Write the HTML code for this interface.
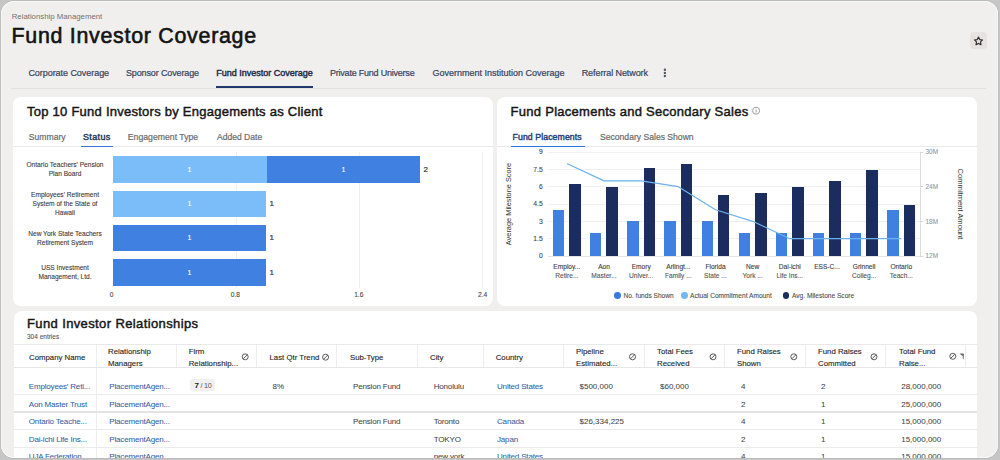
<!DOCTYPE html>
<html><head><meta charset="utf-8">
<style>
*{box-sizing:border-box;margin:0;padding:0}
html,body{width:1000px;height:460px;overflow:hidden;background:#c6c6c6;font-family:"Liberation Sans",sans-serif;}
#frame{position:absolute;left:1px;top:1px;width:997.4px;height:457.3px;background:#f0efed;border-radius:13px;overflow:hidden;box-shadow:0 0 0 0.7px #b9b9b9, inset 0 0 0 1px #f7f7f6}
#in{position:absolute;left:-1px;top:-1px;width:1000px;height:460px}
.t{position:absolute;white-space:nowrap}
.r{position:absolute}
svg{position:absolute;left:0;top:0}
</style></head><body>
<div id="frame"><div id="in">
<div class="t" style="left:11.70px;top:13.00px;font-size:7.8px;line-height:7.8px;color:#727272;font-weight:400;-webkit-text-stroke:0px;">Relationship Management</div>
<div class="t" style="left:11.50px;top:25.88px;font-size:21.4px;line-height:21.4px;color:#141414;font-weight:400;-webkit-text-stroke:0.6px #141414;letter-spacing:0.72px">Fund Investor Coverage</div>
<div class="r" style="left:970.00px;top:32.20px;width:17.00px;height:17.00px;background:#e6e2df;border-radius:4px"></div>
<svg width="1000" height="460" style="z-index:2"><path d="M978.50 37.00 L979.73 39.60 L982.59 39.97 L980.50 41.95 L981.03 44.78 L978.50 43.40 L975.97 44.78 L976.50 41.95 L974.41 39.97 L977.27 39.60 Z" fill="none" stroke="#2a2a2a" stroke-width="1.1" stroke-linejoin="round"/></svg>
<div class="t" style="left:28.40px;top:69.38px;font-size:9px;line-height:9px;color:#34435e;font-weight:400;-webkit-text-stroke:0.2px #34435e;letter-spacing:-0.05px">Corporate Coverage</div>
<div class="t" style="left:126.00px;top:69.38px;font-size:9px;line-height:9px;color:#34435e;font-weight:400;-webkit-text-stroke:0.2px #34435e;letter-spacing:-0.13px">Sponsor Coverage</div>
<div class="t" style="left:216.30px;top:69.38px;font-size:9px;line-height:9px;color:#1d2c4c;font-weight:400;-webkit-text-stroke:0.42px #1d2c4c;">Fund Investor Coverage</div>
<div class="t" style="left:330.00px;top:69.38px;font-size:9px;line-height:9px;color:#34435e;font-weight:400;-webkit-text-stroke:0.2px #34435e;letter-spacing:-0.22px">Private Fund Universe</div>
<div class="t" style="left:432.50px;top:69.38px;font-size:9px;line-height:9px;color:#34435e;font-weight:400;-webkit-text-stroke:0.2px #34435e;">Government Institution Coverage</div>
<div class="t" style="left:581.70px;top:69.38px;font-size:9px;line-height:9px;color:#34435e;font-weight:400;-webkit-text-stroke:0.2px #34435e;letter-spacing:-0.08px">Referral Network</div>
<svg width="1000" height="460"><circle cx="664.9" cy="69.8" r="1.2" fill="#525a6a"/><circle cx="664.9" cy="72.9" r="1.2" fill="#525a6a"/><circle cx="664.9" cy="76.0" r="1.2" fill="#525a6a"/></svg>
<div class="r" style="left:11.00px;top:87.50px;width:975.00px;height:1.50px;background:#e2e1df;"></div>
<div class="r" style="left:216.00px;top:86.30px;width:97.00px;height:1.80px;background:#1f3a6b;"></div>
<div class="r" style="left:13.00px;top:96.80px;width:480.00px;height:209.70px;background:#fff;border-radius:8px"></div>
<div class="r" style="left:497.00px;top:96.80px;width:480.00px;height:209.70px;background:#fff;border-radius:8px"></div>
<div class="r" style="left:13.50px;top:311.00px;width:963.00px;height:170.00px;background:#fff;border-radius:8px"></div>
<div class="t" style="left:27.00px;top:104.80px;font-size:13px;line-height:13px;color:#161616;font-weight:400;-webkit-text-stroke:0.45px #161616;letter-spacing:0.25px">Top 10 Fund Investors by Engagements as Client</div>
<div class="t" style="left:28.80px;top:133.22px;font-size:8.6px;line-height:8.6px;color:#6b6b6b;font-weight:400;-webkit-text-stroke:0.2px #6b6b6b;">Summary</div>
<div class="t" style="left:83.00px;top:132.88px;font-size:9px;line-height:9px;color:#1f3557;font-weight:400;-webkit-text-stroke:0.42px #1f3557;letter-spacing:0.35px">Status</div>
<div class="t" style="left:127.80px;top:133.14px;font-size:8.7px;line-height:8.7px;color:#6b6b6b;font-weight:400;-webkit-text-stroke:0.2px #6b6b6b;">Engagement Type</div>
<div class="t" style="left:217.00px;top:133.26px;font-size:8.55px;line-height:8.55px;color:#6b6b6b;font-weight:400;-webkit-text-stroke:0.2px #6b6b6b;">Added Date</div>
<div class="r" style="left:13.00px;top:146.30px;width:480.00px;height:1.00px;background:#e8e8e8;"></div>
<div class="r" style="left:81.00px;top:145.60px;width:32.00px;height:1.70px;background:#3577df;"></div>
<div class="t" style="left:510.60px;top:104.80px;font-size:13px;line-height:13px;color:#161616;font-weight:400;-webkit-text-stroke:0.45px #161616;letter-spacing:0.27px">Fund Placements and Secondary Sales</div>
<svg width="1000" height="460"><circle cx="756.1" cy="110.7" r="3.5" fill="none" stroke="#8c8c8c" stroke-width="0.85"/><rect x="755.7" y="110.2" width="0.85" height="2.3" fill="#8c8c8c"/><circle cx="756.12" cy="108.9" r="0.5" fill="#8c8c8c"/></svg>
<div class="t" style="left:512.60px;top:133.14px;font-size:8.7px;line-height:8.7px;color:#23407a;font-weight:400;-webkit-text-stroke:0.42px #23407a;letter-spacing:0.1px">Fund Placements</div>
<div class="t" style="left:600.00px;top:133.22px;font-size:8.6px;line-height:8.6px;color:#6b6b6b;font-weight:400;-webkit-text-stroke:0.2px #6b6b6b;">Secondary Sales Shown</div>
<div class="r" style="left:497.00px;top:146.30px;width:480.00px;height:1.00px;background:#e8e8e8;"></div>
<div class="r" style="left:510.60px;top:145.60px;width:74.00px;height:1.70px;background:#2f74df;"></div>
<div class="r" style="left:235.50px;top:152.00px;width:0.80px;height:136.00px;background:#f0f0f0;"></div>
<div class="r" style="left:358.80px;top:152.00px;width:0.80px;height:136.00px;background:#f0f0f0;"></div>
<div class="r" style="left:482.30px;top:152.00px;width:0.80px;height:136.00px;background:#f0f0f0;"></div>
<div class="r" style="left:112.60px;top:156.40px;width:307.80px;height:26.20px;background:#7bbdf8;"></div>
<div class="r" style="left:266.50px;top:156.40px;width:153.90px;height:26.20px;background:#3f80e0;"></div>
<div class="t" style="left:-10.45px;width:400px;text-align:center;top:165.57px;font-size:7px;line-height:7px;color:#ffffff;font-weight:400;-webkit-text-stroke:0.1px #ffffff;">1</div>
<div class="t" style="left:143.45px;width:400px;text-align:center;top:165.57px;font-size:7px;line-height:7px;color:#ffffff;font-weight:400;-webkit-text-stroke:0.1px #ffffff;">1</div>
<div class="t" style="left:423.40px;top:165.83px;font-size:8px;line-height:8px;color:#333;font-weight:400;-webkit-text-stroke:0.2px #333;">2</div>
<div class="r" style="left:112.60px;top:190.70px;width:153.90px;height:26.20px;background:#7bbdf8;"></div>
<div class="t" style="left:-10.45px;width:400px;text-align:center;top:199.87px;font-size:7px;line-height:7px;color:#ffffff;font-weight:400;-webkit-text-stroke:0.1px #ffffff;">1</div>
<div class="t" style="left:269.50px;top:200.13px;font-size:8px;line-height:8px;color:#333;font-weight:400;-webkit-text-stroke:0.2px #333;">1</div>
<div class="r" style="left:112.60px;top:225.00px;width:153.90px;height:26.20px;background:#3f80e0;"></div>
<div class="t" style="left:-10.45px;width:400px;text-align:center;top:234.17px;font-size:7px;line-height:7px;color:#ffffff;font-weight:400;-webkit-text-stroke:0.1px #ffffff;">1</div>
<div class="t" style="left:269.50px;top:234.43px;font-size:8px;line-height:8px;color:#333;font-weight:400;-webkit-text-stroke:0.2px #333;">1</div>
<div class="r" style="left:112.60px;top:259.40px;width:153.90px;height:26.20px;background:#3f80e0;"></div>
<div class="t" style="left:-10.45px;width:400px;text-align:center;top:268.57px;font-size:7px;line-height:7px;color:#ffffff;font-weight:400;-webkit-text-stroke:0.1px #ffffff;">1</div>
<div class="t" style="left:269.50px;top:268.83px;font-size:8px;line-height:8px;color:#333;font-weight:400;-webkit-text-stroke:0.2px #333;">1</div>
<div class="t" style="left:-135.00px;width:400px;text-align:center;top:162.19px;font-size:6.6px;line-height:6.6px;color:#3a3a3a;font-weight:400;-webkit-text-stroke:0.1px #3a3a3a;">Ontario Teachers' Pension</div>
<div class="t" style="left:-135.00px;width:400px;text-align:center;top:171.29px;font-size:6.6px;line-height:6.6px;color:#3a3a3a;font-weight:400;-webkit-text-stroke:0.1px #3a3a3a;">Plan Board</div>
<div class="t" style="left:-135.00px;width:400px;text-align:center;top:192.29px;font-size:6.6px;line-height:6.6px;color:#3a3a3a;font-weight:400;-webkit-text-stroke:0.1px #3a3a3a;">Employees' Retirement</div>
<div class="t" style="left:-135.00px;width:400px;text-align:center;top:201.09px;font-size:6.6px;line-height:6.6px;color:#3a3a3a;font-weight:400;-webkit-text-stroke:0.1px #3a3a3a;">System of the State of</div>
<div class="t" style="left:-135.00px;width:400px;text-align:center;top:209.79px;font-size:6.6px;line-height:6.6px;color:#3a3a3a;font-weight:400;-webkit-text-stroke:0.1px #3a3a3a;">Hawaii</div>
<div class="t" style="left:-135.00px;width:400px;text-align:center;top:230.89px;font-size:6.6px;line-height:6.6px;color:#3a3a3a;font-weight:400;-webkit-text-stroke:0.1px #3a3a3a;">New York State Teachers</div>
<div class="t" style="left:-135.00px;width:400px;text-align:center;top:239.79px;font-size:6.6px;line-height:6.6px;color:#3a3a3a;font-weight:400;-webkit-text-stroke:0.1px #3a3a3a;">Retirement System</div>
<div class="t" style="left:-135.00px;width:400px;text-align:center;top:265.29px;font-size:6.6px;line-height:6.6px;color:#3a3a3a;font-weight:400;-webkit-text-stroke:0.1px #3a3a3a;">USS Investment</div>
<div class="t" style="left:-135.00px;width:400px;text-align:center;top:274.19px;font-size:6.6px;line-height:6.6px;color:#3a3a3a;font-weight:400;-webkit-text-stroke:0.1px #3a3a3a;">Management, Ltd.</div>
<div class="t" style="left:-88.40px;width:400px;text-align:center;top:291.79px;font-size:6.6px;line-height:6.6px;color:#444;font-weight:400;-webkit-text-stroke:0.1px #444;">0</div>
<div class="t" style="left:35.40px;width:400px;text-align:center;top:291.79px;font-size:6.6px;line-height:6.6px;color:#444;font-weight:400;-webkit-text-stroke:0.1px #444;">0.8</div>
<div class="t" style="left:158.80px;width:400px;text-align:center;top:291.79px;font-size:6.6px;line-height:6.6px;color:#444;font-weight:400;-webkit-text-stroke:0.1px #444;">1.6</div>
<div class="t" style="left:282.60px;width:400px;text-align:center;top:291.79px;font-size:6.6px;line-height:6.6px;color:#444;font-weight:400;-webkit-text-stroke:0.1px #444;">2.4</div>
<div class="r" style="left:548.30px;top:255.60px;width:371.50px;height:0.80px;background:#e4e4e4;"></div>
<div class="t" style="left:142.80px;width:400px;text-align:right;top:253.28px;font-size:6.8px;line-height:6.8px;color:#444;font-weight:400;-webkit-text-stroke:0.1px #444;">0</div>
<div class="r" style="left:548.30px;top:238.27px;width:371.50px;height:0.80px;background:#f0f0f0;"></div>
<div class="t" style="left:142.80px;width:400px;text-align:right;top:235.95px;font-size:6.8px;line-height:6.8px;color:#444;font-weight:400;-webkit-text-stroke:0.1px #444;">1.5</div>
<div class="r" style="left:548.30px;top:220.93px;width:371.50px;height:0.80px;background:#f0f0f0;"></div>
<div class="t" style="left:142.80px;width:400px;text-align:right;top:218.62px;font-size:6.8px;line-height:6.8px;color:#444;font-weight:400;-webkit-text-stroke:0.1px #444;">3</div>
<div class="r" style="left:548.30px;top:203.60px;width:371.50px;height:0.80px;background:#f0f0f0;"></div>
<div class="t" style="left:142.80px;width:400px;text-align:right;top:201.28px;font-size:6.8px;line-height:6.8px;color:#444;font-weight:400;-webkit-text-stroke:0.1px #444;">4.5</div>
<div class="r" style="left:548.30px;top:186.27px;width:371.50px;height:0.80px;background:#f0f0f0;"></div>
<div class="t" style="left:142.80px;width:400px;text-align:right;top:183.95px;font-size:6.8px;line-height:6.8px;color:#444;font-weight:400;-webkit-text-stroke:0.1px #444;">6</div>
<div class="r" style="left:548.30px;top:168.93px;width:371.50px;height:0.80px;background:#f0f0f0;"></div>
<div class="t" style="left:142.80px;width:400px;text-align:right;top:166.62px;font-size:6.8px;line-height:6.8px;color:#444;font-weight:400;-webkit-text-stroke:0.1px #444;">7.5</div>
<div class="r" style="left:548.30px;top:151.60px;width:371.50px;height:0.80px;background:#f0f0f0;"></div>
<div class="t" style="left:142.80px;width:400px;text-align:right;top:149.28px;font-size:6.8px;line-height:6.8px;color:#444;font-weight:400;-webkit-text-stroke:0.1px #444;">9</div>
<div class="r" style="left:919.80px;top:152.00px;width:0.90px;height:104.00px;background:#dedede;"></div>
<div class="r" style="left:919.80px;top:255.60px;width:3.40px;height:0.80px;background:#d6d6d6;"></div>
<div class="t" style="left:925.50px;top:253.45px;font-size:6.5px;line-height:6.5px;color:#9a9a9a;font-weight:400;-webkit-text-stroke:0.1px #9a9a9a;">12M</div>
<div class="r" style="left:919.80px;top:220.93px;width:3.40px;height:0.80px;background:#d6d6d6;"></div>
<div class="t" style="left:925.50px;top:218.78px;font-size:6.5px;line-height:6.5px;color:#9a9a9a;font-weight:400;-webkit-text-stroke:0.1px #9a9a9a;">18M</div>
<div class="r" style="left:919.80px;top:186.27px;width:3.40px;height:0.80px;background:#d6d6d6;"></div>
<div class="t" style="left:925.50px;top:184.11px;font-size:6.5px;line-height:6.5px;color:#9a9a9a;font-weight:400;-webkit-text-stroke:0.1px #9a9a9a;">24M</div>
<div class="r" style="left:919.80px;top:151.60px;width:3.40px;height:0.80px;background:#d6d6d6;"></div>
<div class="t" style="left:925.50px;top:149.45px;font-size:6.5px;line-height:6.5px;color:#9a9a9a;font-weight:400;-webkit-text-stroke:0.1px #9a9a9a;">30M</div>
<div class="r" style="left:553.00px;top:209.78px;width:11.20px;height:46.22px;background:#3f80e0;"></div>
<div class="r" style="left:569.20px;top:184.36px;width:11.50px;height:71.64px;background:#1b2d5e;"></div>
<div class="r" style="left:590.16px;top:232.89px;width:11.20px;height:23.11px;background:#3f80e0;"></div>
<div class="r" style="left:606.36px;top:186.67px;width:11.50px;height:69.33px;background:#1b2d5e;"></div>
<div class="r" style="left:627.32px;top:221.33px;width:11.20px;height:34.67px;background:#3f80e0;"></div>
<div class="r" style="left:643.52px;top:168.18px;width:11.50px;height:87.82px;background:#1b2d5e;"></div>
<div class="r" style="left:664.48px;top:221.33px;width:11.20px;height:34.67px;background:#3f80e0;"></div>
<div class="r" style="left:680.68px;top:163.56px;width:11.50px;height:92.44px;background:#1b2d5e;"></div>
<div class="r" style="left:701.64px;top:221.33px;width:11.20px;height:34.67px;background:#3f80e0;"></div>
<div class="r" style="left:717.84px;top:194.76px;width:11.50px;height:61.24px;background:#1b2d5e;"></div>
<div class="r" style="left:738.80px;top:232.89px;width:11.20px;height:23.11px;background:#3f80e0;"></div>
<div class="r" style="left:755.00px;top:192.79px;width:11.50px;height:63.21px;background:#1b2d5e;"></div>
<div class="r" style="left:775.96px;top:232.89px;width:11.20px;height:23.11px;background:#3f80e0;"></div>
<div class="r" style="left:792.16px;top:186.67px;width:11.50px;height:69.33px;background:#1b2d5e;"></div>
<div class="r" style="left:813.12px;top:232.89px;width:11.20px;height:23.11px;background:#3f80e0;"></div>
<div class="r" style="left:829.32px;top:181.47px;width:11.50px;height:74.53px;background:#1b2d5e;"></div>
<div class="r" style="left:850.28px;top:232.89px;width:11.20px;height:23.11px;background:#3f80e0;"></div>
<div class="r" style="left:866.48px;top:169.91px;width:11.50px;height:86.09px;background:#1b2d5e;"></div>
<div class="r" style="left:887.44px;top:209.78px;width:11.20px;height:46.22px;background:#3f80e0;"></div>
<div class="r" style="left:903.64px;top:204.58px;width:11.50px;height:51.42px;background:#1b2d5e;"></div>
<svg width="1000" height="460"><polyline points="566.85,163.56 604.01,180.89 641.17,180.89 678.33,186.67 715.49,209.78 752.65,221.33 789.81,238.67 826.97,238.67 864.13,238.67 901.29,238.67" fill="none" stroke="#6cb2ee" stroke-width="1.15" stroke-linejoin="round"/></svg>
<div class="t" style="left:366.85px;width:400px;text-align:center;top:264.39px;font-size:6.6px;line-height:6.6px;color:#3a3a3a;font-weight:400;-webkit-text-stroke:0.1px #3a3a3a;">Employ...</div>
<div class="t" style="left:366.85px;width:400px;text-align:center;top:273.39px;font-size:6.6px;line-height:6.6px;color:#555;font-weight:400;-webkit-text-stroke:0.1px #555;">Retire...</div>
<div class="t" style="left:404.01px;width:400px;text-align:center;top:264.39px;font-size:6.6px;line-height:6.6px;color:#3a3a3a;font-weight:400;-webkit-text-stroke:0.1px #3a3a3a;">Aon</div>
<div class="t" style="left:404.01px;width:400px;text-align:center;top:273.39px;font-size:6.6px;line-height:6.6px;color:#555;font-weight:400;-webkit-text-stroke:0.1px #555;">Master...</div>
<div class="t" style="left:441.17px;width:400px;text-align:center;top:264.39px;font-size:6.6px;line-height:6.6px;color:#3a3a3a;font-weight:400;-webkit-text-stroke:0.1px #3a3a3a;">Emory</div>
<div class="t" style="left:441.17px;width:400px;text-align:center;top:273.39px;font-size:6.6px;line-height:6.6px;color:#555;font-weight:400;-webkit-text-stroke:0.1px #555;">Univer...</div>
<div class="t" style="left:478.33px;width:400px;text-align:center;top:264.39px;font-size:6.6px;line-height:6.6px;color:#3a3a3a;font-weight:400;-webkit-text-stroke:0.1px #3a3a3a;">Arlingt...</div>
<div class="t" style="left:478.33px;width:400px;text-align:center;top:273.39px;font-size:6.6px;line-height:6.6px;color:#555;font-weight:400;-webkit-text-stroke:0.1px #555;">Family ...</div>
<div class="t" style="left:515.49px;width:400px;text-align:center;top:264.39px;font-size:6.6px;line-height:6.6px;color:#3a3a3a;font-weight:400;-webkit-text-stroke:0.1px #3a3a3a;">Florida</div>
<div class="t" style="left:515.49px;width:400px;text-align:center;top:273.39px;font-size:6.6px;line-height:6.6px;color:#555;font-weight:400;-webkit-text-stroke:0.1px #555;">State ...</div>
<div class="t" style="left:552.65px;width:400px;text-align:center;top:264.39px;font-size:6.6px;line-height:6.6px;color:#3a3a3a;font-weight:400;-webkit-text-stroke:0.1px #3a3a3a;">New</div>
<div class="t" style="left:552.65px;width:400px;text-align:center;top:273.39px;font-size:6.6px;line-height:6.6px;color:#555;font-weight:400;-webkit-text-stroke:0.1px #555;">York ...</div>
<div class="t" style="left:589.81px;width:400px;text-align:center;top:264.39px;font-size:6.6px;line-height:6.6px;color:#3a3a3a;font-weight:400;-webkit-text-stroke:0.1px #3a3a3a;">Dai-ichi</div>
<div class="t" style="left:589.81px;width:400px;text-align:center;top:273.39px;font-size:6.6px;line-height:6.6px;color:#555;font-weight:400;-webkit-text-stroke:0.1px #555;">Life Ins...</div>
<div class="t" style="left:626.97px;width:400px;text-align:center;top:264.39px;font-size:6.6px;line-height:6.6px;color:#3a3a3a;font-weight:400;-webkit-text-stroke:0.1px #3a3a3a;">ESS-C...</div>
<div class="t" style="left:664.13px;width:400px;text-align:center;top:264.39px;font-size:6.6px;line-height:6.6px;color:#3a3a3a;font-weight:400;-webkit-text-stroke:0.1px #3a3a3a;">Grinnell</div>
<div class="t" style="left:664.13px;width:400px;text-align:center;top:273.39px;font-size:6.6px;line-height:6.6px;color:#555;font-weight:400;-webkit-text-stroke:0.1px #555;">Colleg...</div>
<div class="t" style="left:701.29px;width:400px;text-align:center;top:264.39px;font-size:6.6px;line-height:6.6px;color:#3a3a3a;font-weight:400;-webkit-text-stroke:0.1px #3a3a3a;">Ontario</div>
<div class="t" style="left:701.29px;width:400px;text-align:center;top:273.39px;font-size:6.6px;line-height:6.6px;color:#555;font-weight:400;-webkit-text-stroke:0.1px #555;">Teach...</div>
<div class="t" style="left:458.6px;top:200px;width:100px;height:8px;text-align:center;font-size:7.4px;line-height:8px;color:#333;transform:rotate(-90deg);transform-origin:50px 4px">Average Milestone Score</div>
<div class="t" style="left:910px;top:200px;width:100px;height:8px;text-align:center;font-size:7.6px;line-height:8px;color:#333;transform:rotate(90deg);transform-origin:50px 4px">Commitment Amount</div>
<div class="r" style="left:613.90px;top:292.30px;width:6.80px;height:6.80px;background:#3579e6;border-radius:50%"></div>
<div class="t" style="left:623.50px;top:293.09px;font-size:6.6px;line-height:6.6px;color:#505050;font-weight:400;-webkit-text-stroke:0.1px #505050;">No. funds Shown</div>
<div class="r" style="left:680.80px;top:292.30px;width:6.80px;height:6.80px;background:#74b8f3;border-radius:50%"></div>
<div class="t" style="left:690.00px;top:293.09px;font-size:6.6px;line-height:6.6px;color:#505050;font-weight:400;-webkit-text-stroke:0.1px #505050;">Actual Commitment Amount</div>
<div class="r" style="left:782.60px;top:292.30px;width:6.80px;height:6.80px;background:#1b2d5e;border-radius:50%"></div>
<div class="t" style="left:792.00px;top:293.09px;font-size:6.6px;line-height:6.6px;color:#505050;font-weight:400;-webkit-text-stroke:0.1px #505050;">Avg. Milestone Score</div>
<div class="t" style="left:27.00px;top:317.10px;font-size:13px;line-height:13px;color:#161616;font-weight:400;-webkit-text-stroke:0.45px #161616;letter-spacing:0.38px">Fund Investor Relationships</div>
<div class="t" style="left:27.00px;top:334.30px;font-size:6.5px;line-height:6.5px;color:#585858;font-weight:400;-webkit-text-stroke:0.1px #585858;">304 entries</div>
<div class="r" style="left:13.50px;top:344.20px;width:963.00px;height:0.90px;background:#e9e9e9;"></div>
<div class="r" style="left:13.50px;top:366.90px;width:963.00px;height:1.30px;background:#e6e6e6;"></div>
<div class="r" style="left:96.40px;top:345.00px;width:0.80px;height:22.00px;background:#eeeeee;"></div>
<div class="r" style="left:175.50px;top:345.00px;width:0.80px;height:22.00px;background:#eeeeee;"></div>
<div class="r" style="left:256.00px;top:345.00px;width:0.80px;height:22.00px;background:#eeeeee;"></div>
<div class="r" style="left:336.00px;top:345.00px;width:0.80px;height:22.00px;background:#eeeeee;"></div>
<div class="r" style="left:416.50px;top:345.00px;width:0.80px;height:22.00px;background:#eeeeee;"></div>
<div class="r" style="left:483.00px;top:345.00px;width:0.80px;height:22.00px;background:#eeeeee;"></div>
<div class="r" style="left:563.00px;top:345.00px;width:0.80px;height:22.00px;background:#eeeeee;"></div>
<div class="r" style="left:643.75px;top:345.00px;width:0.80px;height:22.00px;background:#eeeeee;"></div>
<div class="r" style="left:723.75px;top:345.00px;width:0.80px;height:22.00px;background:#eeeeee;"></div>
<div class="r" style="left:804.50px;top:345.00px;width:0.80px;height:22.00px;background:#eeeeee;"></div>
<div class="r" style="left:884.50px;top:345.00px;width:0.80px;height:22.00px;background:#eeeeee;"></div>
<div class="r" style="left:965.10px;top:345.00px;width:0.80px;height:22.00px;background:#eeeeee;"></div>
<div class="r" style="left:96.40px;top:368.00px;width:0.80px;height:100.00px;background:#efefef;"></div>
<div class="r" style="left:13.50px;top:393.90px;width:963.00px;height:1.00px;background:#ebebeb;"></div>
<div class="r" style="left:13.50px;top:411.25px;width:963.00px;height:1.50px;background:#e3e3e3;"></div>
<div class="r" style="left:13.50px;top:429.25px;width:963.00px;height:1.10px;background:#e8e8e8;"></div>
<div class="r" style="left:13.50px;top:447.00px;width:963.00px;height:1.00px;background:#ebebeb;"></div>
<div class="t" style="left:29.00px;top:354.14px;font-size:7.8px;line-height:7.8px;color:#262626;font-weight:400;-webkit-text-stroke:0.12px #262626;">Company Name</div>
<div class="t" style="left:108.00px;top:348.04px;font-size:7.8px;line-height:7.8px;color:#262626;font-weight:400;-webkit-text-stroke:0.12px #262626;">Relationship</div>
<div class="t" style="left:108.00px;top:359.64px;font-size:7.8px;line-height:7.8px;color:#262626;font-weight:400;-webkit-text-stroke:0.12px #262626;">Managers</div>
<div class="t" style="left:188.70px;top:348.04px;font-size:7.8px;line-height:7.8px;color:#262626;font-weight:400;-webkit-text-stroke:0.12px #262626;">Firm</div>
<div class="t" style="left:188.70px;top:359.64px;font-size:7.8px;line-height:7.8px;color:#262626;font-weight:400;-webkit-text-stroke:0.12px #262626;">Relationship...</div>
<svg width="1000" height="460"><circle cx="245.2" cy="356.8" r="3" fill="none" stroke="#333" stroke-width="0.8"/><line x1="243.2" y1="358.8" x2="247.2" y2="354.8" stroke="#333" stroke-width="0.8"/></svg>
<div class="t" style="left:269.50px;top:354.14px;font-size:7.8px;line-height:7.8px;color:#262626;font-weight:400;-webkit-text-stroke:0.12px #262626;">Last Qtr Trend</div>
<svg width="1000" height="460"><circle cx="325.6" cy="357.2" r="3" fill="none" stroke="#333" stroke-width="0.8"/><line x1="323.6" y1="359.2" x2="327.6" y2="355.2" stroke="#333" stroke-width="0.8"/></svg>
<div class="t" style="left:350.00px;top:354.14px;font-size:7.8px;line-height:7.8px;color:#262626;font-weight:400;-webkit-text-stroke:0.12px #262626;">Sub-Type</div>
<div class="t" style="left:430.00px;top:354.14px;font-size:7.8px;line-height:7.8px;color:#262626;font-weight:400;-webkit-text-stroke:0.12px #262626;">City</div>
<div class="t" style="left:495.70px;top:354.14px;font-size:7.8px;line-height:7.8px;color:#262626;font-weight:400;-webkit-text-stroke:0.12px #262626;">Country</div>
<div class="t" style="left:576.00px;top:348.04px;font-size:7.8px;line-height:7.8px;color:#262626;font-weight:400;-webkit-text-stroke:0.12px #262626;">Pipeline</div>
<div class="t" style="left:576.00px;top:359.64px;font-size:7.8px;line-height:7.8px;color:#262626;font-weight:400;-webkit-text-stroke:0.12px #262626;">Estimated...</div>
<svg width="1000" height="460"><circle cx="632.5" cy="356.8" r="3" fill="none" stroke="#333" stroke-width="0.8"/><line x1="630.5" y1="358.8" x2="634.5" y2="354.8" stroke="#333" stroke-width="0.8"/></svg>
<div class="t" style="left:657.00px;top:348.04px;font-size:7.8px;line-height:7.8px;color:#262626;font-weight:400;-webkit-text-stroke:0.12px #262626;">Total Fees</div>
<div class="t" style="left:657.00px;top:359.64px;font-size:7.8px;line-height:7.8px;color:#262626;font-weight:400;-webkit-text-stroke:0.12px #262626;">Received</div>
<svg width="1000" height="460"><circle cx="713" cy="356.8" r="3" fill="none" stroke="#333" stroke-width="0.8"/><line x1="711" y1="358.8" x2="715" y2="354.8" stroke="#333" stroke-width="0.8"/></svg>
<div class="t" style="left:737.00px;top:348.04px;font-size:7.8px;line-height:7.8px;color:#262626;font-weight:400;-webkit-text-stroke:0.12px #262626;">Fund Raises</div>
<div class="t" style="left:737.00px;top:359.64px;font-size:7.8px;line-height:7.8px;color:#262626;font-weight:400;-webkit-text-stroke:0.12px #262626;">Shown</div>
<svg width="1000" height="460"><circle cx="793.8" cy="356.8" r="3" fill="none" stroke="#333" stroke-width="0.8"/><line x1="791.8" y1="358.8" x2="795.8" y2="354.8" stroke="#333" stroke-width="0.8"/></svg>
<div class="t" style="left:818.00px;top:348.04px;font-size:7.8px;line-height:7.8px;color:#262626;font-weight:400;-webkit-text-stroke:0.12px #262626;">Fund Raises</div>
<div class="t" style="left:818.00px;top:359.64px;font-size:7.8px;line-height:7.8px;color:#262626;font-weight:400;-webkit-text-stroke:0.12px #262626;">Committed</div>
<svg width="1000" height="460"><circle cx="874" cy="356.8" r="3" fill="none" stroke="#333" stroke-width="0.8"/><line x1="872" y1="358.8" x2="876" y2="354.8" stroke="#333" stroke-width="0.8"/></svg>
<div class="t" style="left:899.00px;top:348.04px;font-size:7.8px;line-height:7.8px;color:#262626;font-weight:400;-webkit-text-stroke:0.12px #262626;">Total Fund</div>
<div class="t" style="left:899.00px;top:359.64px;font-size:7.8px;line-height:7.8px;color:#262626;font-weight:400;-webkit-text-stroke:0.12px #262626;">Raise...</div>
<svg width="1000" height="460"><circle cx="952.8" cy="356.3" r="3" fill="none" stroke="#333" stroke-width="0.8"/><line x1="950.8" y1="358.3" x2="954.8" y2="354.3" stroke="#333" stroke-width="0.8"/></svg>
<svg width="1000" height="460"><path d="M959.3 353.6 L963.6 353.6 L963.6 356.8 Z" fill="#666"/><line x1="963.3" y1="354" x2="963.3" y2="359.2" stroke="#666" stroke-width="0.8"/></svg>
<div class="t" style="left:28.80px;top:382.63px;font-size:8.0px;line-height:8.0px;color:#3460a3;font-weight:400;-webkit-text-stroke:0.05px;letter-spacing:-0.17px">Employees' Reti...</div>
<div class="t" style="left:109.30px;top:382.63px;font-size:8.0px;line-height:8.0px;color:#3460a3;font-weight:400;-webkit-text-stroke:0.05px;letter-spacing:-0.17px">PlacementAgen...</div>
<div class="t" style="left:272.50px;top:382.63px;font-size:8.0px;line-height:8.0px;color:#454545;font-weight:400;-webkit-text-stroke:0.05px;">8%</div>
<div class="t" style="left:353.00px;top:382.63px;font-size:8.0px;line-height:8.0px;color:#454545;font-weight:400;-webkit-text-stroke:0.05px;letter-spacing:-0.17px">Pension Fund</div>
<div class="t" style="left:433.70px;top:382.63px;font-size:8.0px;line-height:8.0px;color:#454545;font-weight:400;-webkit-text-stroke:0.05px;letter-spacing:-0.17px">Honolulu</div>
<div class="t" style="left:497.00px;top:382.63px;font-size:8.0px;line-height:8.0px;color:#3460a3;font-weight:400;-webkit-text-stroke:0.05px;letter-spacing:-0.17px">United States</div>
<div class="t" style="left:579.50px;top:382.63px;font-size:8.0px;line-height:8.0px;color:#454545;font-weight:400;-webkit-text-stroke:0.05px;">$500,000</div>
<div class="t" style="left:660.00px;top:382.63px;font-size:8.0px;line-height:8.0px;color:#454545;font-weight:400;-webkit-text-stroke:0.05px;">$60,000</div>
<div class="t" style="left:741.00px;top:382.63px;font-size:8.0px;line-height:8.0px;color:#454545;font-weight:400;-webkit-text-stroke:0.05px;">4</div>
<div class="t" style="left:821.00px;top:382.63px;font-size:8.0px;line-height:8.0px;color:#454545;font-weight:400;-webkit-text-stroke:0.05px;">2</div>
<div class="t" style="left:901.20px;top:382.63px;font-size:8.0px;line-height:8.0px;color:#454545;font-weight:400;-webkit-text-stroke:0.05px;">28,000,000</div>
<div class="t" style="left:28.80px;top:400.63px;font-size:8.0px;line-height:8.0px;color:#3460a3;font-weight:400;-webkit-text-stroke:0.05px;letter-spacing:-0.17px">Aon Master Trust</div>
<div class="t" style="left:109.30px;top:400.63px;font-size:8.0px;line-height:8.0px;color:#3460a3;font-weight:400;-webkit-text-stroke:0.05px;letter-spacing:-0.17px">PlacementAgen...</div>
<div class="t" style="left:741.00px;top:400.63px;font-size:8.0px;line-height:8.0px;color:#454545;font-weight:400;-webkit-text-stroke:0.05px;">2</div>
<div class="t" style="left:821.00px;top:400.63px;font-size:8.0px;line-height:8.0px;color:#454545;font-weight:400;-webkit-text-stroke:0.05px;">1</div>
<div class="t" style="left:901.20px;top:400.63px;font-size:8.0px;line-height:8.0px;color:#454545;font-weight:400;-webkit-text-stroke:0.05px;">25,000,000</div>
<div class="t" style="left:28.80px;top:418.13px;font-size:8.0px;line-height:8.0px;color:#3460a3;font-weight:400;-webkit-text-stroke:0.05px;letter-spacing:-0.17px">Ontario Teache...</div>
<div class="t" style="left:109.30px;top:418.13px;font-size:8.0px;line-height:8.0px;color:#3460a3;font-weight:400;-webkit-text-stroke:0.05px;letter-spacing:-0.17px">PlacementAgen...</div>
<div class="t" style="left:353.00px;top:418.13px;font-size:8.0px;line-height:8.0px;color:#454545;font-weight:400;-webkit-text-stroke:0.05px;letter-spacing:-0.17px">Pension Fund</div>
<div class="t" style="left:433.70px;top:418.13px;font-size:8.0px;line-height:8.0px;color:#454545;font-weight:400;-webkit-text-stroke:0.05px;letter-spacing:-0.17px">Toronto</div>
<div class="t" style="left:497.00px;top:418.13px;font-size:8.0px;line-height:8.0px;color:#3460a3;font-weight:400;-webkit-text-stroke:0.05px;letter-spacing:-0.17px">Canada</div>
<div class="t" style="left:579.50px;top:418.13px;font-size:8.0px;line-height:8.0px;color:#454545;font-weight:400;-webkit-text-stroke:0.05px;">$26,334,225</div>
<div class="t" style="left:741.00px;top:418.13px;font-size:8.0px;line-height:8.0px;color:#454545;font-weight:400;-webkit-text-stroke:0.05px;">4</div>
<div class="t" style="left:821.00px;top:418.13px;font-size:8.0px;line-height:8.0px;color:#454545;font-weight:400;-webkit-text-stroke:0.05px;">1</div>
<div class="t" style="left:901.20px;top:418.13px;font-size:8.0px;line-height:8.0px;color:#454545;font-weight:400;-webkit-text-stroke:0.05px;">15,000,000</div>
<div class="t" style="left:28.80px;top:435.63px;font-size:8.0px;line-height:8.0px;color:#3460a3;font-weight:400;-webkit-text-stroke:0.05px;letter-spacing:-0.17px">Dai-ichi Life Ins...</div>
<div class="t" style="left:109.30px;top:435.63px;font-size:8.0px;line-height:8.0px;color:#3460a3;font-weight:400;-webkit-text-stroke:0.05px;letter-spacing:-0.17px">PlacementAgen...</div>
<div class="t" style="left:433.70px;top:435.63px;font-size:8.0px;line-height:8.0px;color:#454545;font-weight:400;-webkit-text-stroke:0.05px;letter-spacing:-0.17px">TOKYO</div>
<div class="t" style="left:497.00px;top:435.63px;font-size:8.0px;line-height:8.0px;color:#3460a3;font-weight:400;-webkit-text-stroke:0.05px;letter-spacing:-0.17px">Japan</div>
<div class="t" style="left:741.00px;top:435.63px;font-size:8.0px;line-height:8.0px;color:#454545;font-weight:400;-webkit-text-stroke:0.05px;">2</div>
<div class="t" style="left:821.00px;top:435.63px;font-size:8.0px;line-height:8.0px;color:#454545;font-weight:400;-webkit-text-stroke:0.05px;">1</div>
<div class="t" style="left:901.20px;top:435.63px;font-size:8.0px;line-height:8.0px;color:#454545;font-weight:400;-webkit-text-stroke:0.05px;">15,000,000</div>
<div class="t" style="left:28.80px;top:453.23px;font-size:8.0px;line-height:8.0px;color:#3460a3;font-weight:400;-webkit-text-stroke:0.05px;letter-spacing:-0.17px">UJA Federation...</div>
<div class="t" style="left:109.30px;top:453.23px;font-size:8.0px;line-height:8.0px;color:#3460a3;font-weight:400;-webkit-text-stroke:0.05px;letter-spacing:-0.17px">PlacementAgen...</div>
<div class="t" style="left:433.70px;top:453.23px;font-size:8.0px;line-height:8.0px;color:#454545;font-weight:400;-webkit-text-stroke:0.05px;letter-spacing:-0.17px">new york</div>
<div class="t" style="left:497.00px;top:453.23px;font-size:8.0px;line-height:8.0px;color:#3460a3;font-weight:400;-webkit-text-stroke:0.05px;letter-spacing:-0.17px">United States</div>
<div class="t" style="left:741.00px;top:453.23px;font-size:8.0px;line-height:8.0px;color:#454545;font-weight:400;-webkit-text-stroke:0.05px;">4</div>
<div class="t" style="left:821.00px;top:453.23px;font-size:8.0px;line-height:8.0px;color:#454545;font-weight:400;-webkit-text-stroke:0.05px;">1</div>
<div class="t" style="left:901.20px;top:453.23px;font-size:8.0px;line-height:8.0px;color:#454545;font-weight:400;-webkit-text-stroke:0.05px;">15,000,000</div>
<div class="r" style="left:190.00px;top:379.20px;width:25.40px;height:12.30px;background:#f0f0f0;border-radius:3px"></div>
<div class="t" style="left:194.6px;top:381.2px;font-size:8px;line-height:9px;color:#222;letter-spacing:-0.2px"><b>7</b><span style="color:#555;font-size:7.2px;letter-spacing:-0.3px"> / 10</span></div>
</div></div></body></html>
